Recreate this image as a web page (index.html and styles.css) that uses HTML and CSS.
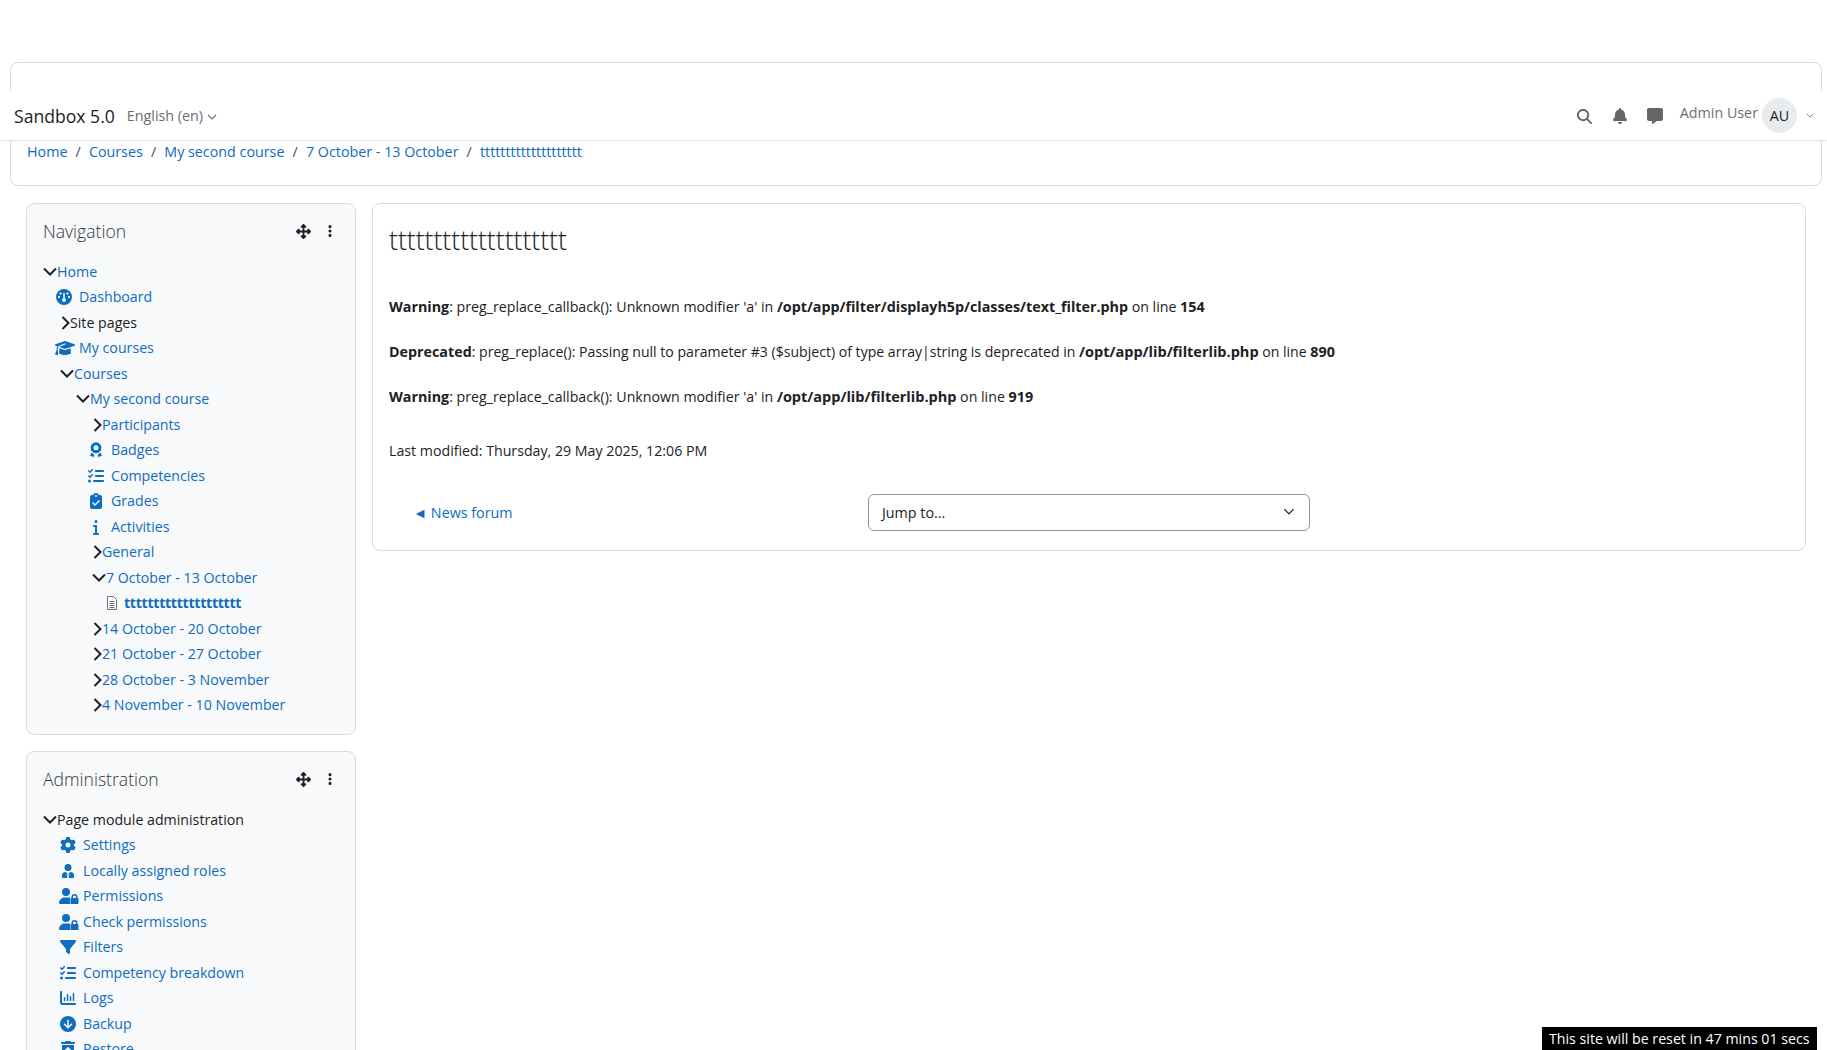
FILE: index.html
```html
<!DOCTYPE html>
<html lang="en">
<head>
<meta charset="utf-8">
<title>tttttttttttttttttttt</title>
<link rel="stylesheet" href="styles.css">
</head>
<body>
<svg class="sprite" aria-hidden="true">
  <symbol id="i-search" viewBox="0 0 512 512"><path d="M416 208c0 45.9-14.9 88.3-40 122.7L502.6 457.4c12.5 12.5 12.5 32.8 0 45.3s-32.8 12.5-45.3 0L330.7 376c-34.4 25.2-76.8 40-122.7 40C93.1 416 0 322.9 0 208S93.1 0 208 0S416 93.1 416 208zM208 352a144 144 0 1 0 0-288 144 144 0 1 0 0 288z"/></symbol>
  <symbol id="i-bell" viewBox="0 0 448 512"><path d="M224 0c-17.7 0-32 14.3-32 32V51.2C119 66 64 130.6 64 208v18.8c0 47-17.3 92.4-48.5 127.6l-7.4 8.3c-8.4 9.4-10.4 22.9-5.3 34.4S19.4 416 32 416H416c12.6 0 24-7.4 29.2-18.9s3.1-25-5.3-34.4l-7.4-8.3C401.3 319.2 384 273.9 384 226.8V208c0-77.4-55-142-128-156.8V32c0-17.7-14.3-32-32-32zm45.3 493.3c12-12 18.7-28.3 18.7-45.3H224 160c0 17 6.7 33.3 18.7 45.3s28.3 18.7 45.3 18.7s33.3-6.7 45.3-18.7z"/></symbol>
  <symbol id="i-message" viewBox="0 0 512 512"><path d="M64 0C28.7 0 0 28.7 0 64V352c0 35.3 28.7 64 64 64h96v80c0 6.1 3.4 11.6 8.8 14.3s11.9 2.1 16.8-1.5L309.3 416H448c35.3 0 64-28.7 64-64V64c0-35.3-28.7-64-64-64H64z"/></symbol>
  <symbol id="i-move" viewBox="0 0 512 512"><path d="M278.6 9.4c-12.5-12.5-32.8-12.5-45.3 0l-64 64c-9.2 9.2-11.9 22.9-6.9 34.9s16.6 19.8 29.6 19.8h32v96H128V192c0-12.9-7.8-24.6-19.8-29.6s-25.7-2.2-34.9 6.9l-64 64c-12.5 12.5-12.5 32.8 0 45.3l64 64c9.2 9.2 22.9 11.9 34.9 6.9s19.8-16.6 19.8-29.6V288h96v96H192c-12.9 0-24.6 7.8-29.6 19.8s-2.2 25.7 6.9 34.9l64 64c12.5 12.5 32.8 12.5 45.3 0l64-64c9.2-9.2 11.9-22.9 6.9-34.9s-16.6-19.8-29.6-19.8H288V288h96v32c0 12.9 7.8 24.6 19.8 29.6s25.7 2.2 34.9-6.9l64-64c12.5-12.5 12.5-32.8 0-45.3l-64-64c-9.2-9.2-22.9-11.9-34.9-6.9s-19.8 16.6-19.8 29.6v32H288V128h32c12.9 0 24.6-7.8 29.6-19.8s2.2-25.7-6.9-34.9l-64-64z"/></symbol>
  <symbol id="i-dots" viewBox="0 0 128 512"><path d="M64 360a56 56 0 1 0 0 112 56 56 0 1 0 0-112zm0-160a56 56 0 1 0 0 112 56 56 0 1 0 0-112zM120 96A56 56 0 1 0 8 96a56 56 0 1 0 112 0z"/></symbol>
  <symbol id="i-gauge" viewBox="0 0 512 512"><path fill-rule="evenodd" d="M0 256a256 256 0 1 1 512 0A256 256 0 1 1 0 256zM232 140c0-13 11-24 24-24s24 11 24 24V292c23 9 40 32 40 60 0 35-29 64-64 64s-64-29-64-64c0-28 17-51 40-60zM112 144a36 36 0 1 0 72 0 36 36 0 1 0-72 0zM328 144a36 36 0 1 0 72 0 36 36 0 1 0-72 0zM60 256a36 36 0 1 0 72 0 36 36 0 1 0-72 0zM380 256a36 36 0 1 0 72 0 36 36 0 1 0-72 0z"/></symbol>
  <symbol id="i-cap" viewBox="0 0 640 512"><path d="M320 32c-8.1 0-16.1 1.4-23.7 4.1L15.8 137.4C6.3 140.9 0 149.9 0 160s6.3 19.1 15.8 22.6l57.9 20.9C57.3 229.3 48 259.8 48 291.9v28.1c0 28.4-10.8 57.7-22.3 80.8c-6.5 13-13.9 25.8-22.5 37.6C0 442.7-.9 448.3 .9 453.4s6 8.9 11.2 10.2l64 16c4.2 1.1 8.7 .3 12.4-2s6.3-6.1 7.1-10.4c8.6-42.8 4.3-81.2-2.1-108.7C90.3 344.3 86 329.8 80 316.5V291.9c0-30.2 10.2-58.7 27.9-81.5c12.9-15.5 29.6-28 49.2-35.7l157-61.7c8.2-3.2 17.5 .8 20.7 9s-.8 17.5-9 20.7l-157 61.7c-12.4 4.9-23.3 12.4-32.2 21.6l159.6 57.6c7.6 2.7 15.6 4.1 23.7 4.1s16.1-1.4 23.7-4.1L624.2 182.6c9.5-3.4 15.8-12.5 15.8-22.6s-6.3-19.1-15.8-22.6L343.7 36.1C336.1 33.4 328.1 32 320 32zM128 408c0 35.3 86 72 192 72s192-36.7 192-72L496.7 262.6 354.5 314c-11.1 4-22.8 6-34.5 6s-23.5-2-34.5-6L143.3 262.6 128 408z"/></symbol>
  <symbol id="i-award" viewBox="0 0 384 512"><path fill-rule="evenodd" d="M192 0l42 26 50-2 24 44 44 24-2 50 26 42-26 42 2 50-44 24-24 44-50-2-42 26-42-26-50 2-24-44-44-24 2-50L8 184l26-42-2-50 44-24 24-44 50 2zM192 104a80 80 0 1 0 0 160 80 80 0 1 0 0-160z"/><path d="M40 345l-40 110 64-6 38 58 42-118-38 2-30-30zM344 345l40 110-64-6-38 58-42-118 38 2 30-30z"/></symbol>
  <symbol id="i-list" viewBox="0 0 512 512"><path d="M152 38c10 9 11 24 2 34L82 152c-4 5-11 8-17 8s-13-2-17-7L8 113c-9-9-9-25 0-34s25-9 34 0l22 22 54-61c9-10 24-11 34-2zM152 198c10 9 11 24 2 34L82 312c-4 5-11 8-17 8s-13-2-17-7L8 273c-9-9-9-25 0-34s25-9 34 0l22 22 54-61c9-10 24-11 34-2zM224 96c0-18 14-32 32-32H480c18 0 32 14 32 32s-14 32-32 32H256c-18 0-32-14-32-32zM224 256c0-18 14-32 32-32H480c18 0 32 14 32 32s-14 32-32 32H256c-18 0-32-14-32-32zM160 416c0-18 14-32 32-32H480c18 0 32 14 32 32s-14 32-32 32H192c-18 0-32-14-32-32zM48 368a48 48 0 1 1 0 96 48 48 0 1 1 0-96z"/></symbol>
  <symbol id="i-clip" viewBox="0 0 384 512"><path fill-rule="evenodd" d="M192 0c-42 0-77 27-90 64H64C29 64 0 93 0 128V448c0 35 29 64 64 64H320c35 0 64-29 64-64V128c0-35-29-64-64-64H282C269 27 234 0 192 0zM192 64a32 32 0 1 1 0 64 32 32 0 1 1 0-64zM305 273L177 401c-9 9-25 9-34 0L79 337c-9-9-9-25 0-34s25-9 34 0l47 47L271 239c9-9 25-9 34 0s9 25 0 34z"/></symbol>
  <symbol id="i-info" viewBox="0 0 192 512"><path d="M48 80a48 48 0 1 1 96 0A48 48 0 1 1 48 80zM0 224c0-17.7 14.3-32 32-32H96c17.7 0 32 14.3 32 32V448h32c17.7 0 32 14.3 32 32s-14.3 32-32 32H32c-17.7 0-32-14.3-32-32s14.3-32 32-32H64V256H32c-17.7 0-32-14.3-32-32z"/></symbol>
  <symbol id="i-gear" viewBox="0 0 512 512"><path d="M495.9 166.6c3.2 8.7 .5 18.4-6.4 24.6l-43.3 39.4c1.1 8.3 1.7 16.8 1.7 25.4s-.6 17.1-1.7 25.4l43.3 39.4c6.9 6.2 9.6 15.9 6.4 24.6c-4.4 11.9-9.7 23.3-15.8 34.3l-4.7 8.1c-6.6 11-14 21.4-22.1 31.2c-5.9 7.2-15.7 9.6-24.5 6.8l-55.7-17.7c-13.4 10.3-28.2 18.9-44 25.4l-12.5 57.1c-2 9.1-9 16.3-18.2 17.8c-13.8 2.3-28 3.5-42.5 3.5s-28.7-1.2-42.5-3.5c-9.2-1.5-16.2-8.7-18.2-17.8l-12.5-57.1c-15.8-6.5-30.6-15.1-44-25.4L83.1 425.9c-8.8 2.8-18.6 .3-24.5-6.8c-8.1-9.8-15.5-20.2-22.1-31.2l-4.7-8.1c-6.1-11-11.4-22.4-15.8-34.3c-3.2-8.7-.5-18.4 6.4-24.6l43.3-39.4C64.6 273.1 64 264.6 64 256s.6-17.1 1.7-25.4L22.4 191.2c-6.9-6.2-9.6-15.9-6.4-24.6c4.4-11.9 9.7-23.3 15.8-34.3l4.7-8.1c6.6-11 14-21.4 22.1-31.2c5.9-7.2 15.7-9.6 24.5-6.8l55.7 17.7c13.4-10.3 28.2-18.9 44-25.4l12.5-57.1c2-9.1 9-16.3 18.2-17.8C227.3 1.2 241.5 0 256 0s28.7 1.2 42.5 3.5c9.2 1.5 16.2 8.7 18.2 17.8l12.5 57.1c15.8 6.5 30.6 15.1 44 25.4l55.7-17.7c8.8-2.8 18.6-.3 24.5 6.8c8.1 9.8 15.5 20.2 22.1 31.2l4.7 8.1c6.1 11 11.4 22.4 15.8 34.3zM256 336a80 80 0 1 0 0-160 80 80 0 1 0 0 160z"/></symbol>
  <symbol id="i-tie" viewBox="0 0 448 512"><path d="M224 256a128 128 0 1 0 0-256 128 128 0 1 0 0 256zM130 296C58 296 0 354 0 426v54c0 18 14 32 32 32H198l-24-126 20-62c-6-5-12-8-20-8zM318 296c72 0 130 58 130 130v54c0 18-14 32-32 32H250l24-126-20-62c6-5 12-8 20-8zM224 340l-18 46 18 96 18-96z"/></symbol>
  <symbol id="i-ulock" viewBox="0 0 640 512"><path fill-rule="evenodd" d="M224 256a128 128 0 1 0 0-256 128 128 0 1 0 0 256zM178 304C80 304 0 384 0 482c0 16 13 30 30 30H360c-5-9-8-20-8-32V352c0-13 3-25 10-35-12-8-28-13-44-13H178zM496 240a48 48 0 0 0-48 48v32h96V288a48 48 0 0 0-48-48zM400 288a96 96 0 1 1 192 0v32c18 0 32 14 32 32V480c0 18-14 32-32 32H400c-18 0-32-14-32-32V352c0-18 14-32 32-32V288z"/></symbol>
  <symbol id="i-filter" viewBox="0 0 512 512"><path d="M3.9 54.9C10.5 40.9 24.5 32 40 32H472c15.5 0 29.5 8.9 36.1 22.9s4.6 30.5-5.2 42.5L320 320.9V448c0 12.1-6.8 23.2-17.7 28.6s-23.8 4.3-33.5-3l-64-48c-8.1-6-12.8-15.5-12.8-25.6V320.9L9 97.3C-.7 85.4-2.8 68.8 3.9 54.9z"/></symbol>
  <symbol id="i-chart" viewBox="0 0 512 512"><path d="M32 32c18 0 32 14 32 32V400c0 9 7 16 16 16H480c18 0 32 14 32 32s-14 32-32 32H80c-44 0-80-36-80-80V64c0-18 14-32 32-32zM144 224c13 0 24 11 24 24v88c0 13-11 24-24 24s-24-11-24-24V248c0-13 11-24 24-24zM240 128c13 0 24 11 24 24V336c0 13-11 24-24 24s-24-11-24-24V152c0-13 11-24 24-24zM336 192c13 0 24 11 24 24V336c0 13-11 24-24 24s-24-11-24-24V216c0-13 11-24 24-24zM432 96c13 0 24 11 24 24V336c0 13-11 24-24 24s-24-11-24-24V120c0-13 11-24 24-24z"/></symbol>
  <symbol id="i-down" viewBox="0 0 512 512"><path d="M256 0a256 256 0 1 0 0 512A256 256 0 1 0 256 0zM127 281c-9.4-9.4-9.4-24.6 0-33.9s24.6-9.4 33.9 0l71 71L232 136c0-13.3 10.7-24 24-24s24 10.7 24 24l0 182.1 71-71c9.4-9.4 24.6-9.4 33.9 0s9.4 24.6 0 33.9L273 393c-9.4 9.4-24.6 9.4-33.9 0L127 281z"/></symbol>
  <symbol id="i-restore" viewBox="0 0 448 512"><path fill-rule="evenodd" d="M163.8 0H284.2c12.1 0 23.2 6.8 28.6 17.7L320 32h96c17.7 0 32 14.3 32 32s-14.3 32-32 32H32C14.3 96 0 81.7 0 64S14.3 32 32 32h96l7.2-14.3C140.6 6.8 151.7 0 163.8 0zM32 128H416V448c0 35.3-28.7 64-64 64H96c-35.3 0-64-28.7-64-64V128zM207 199L127 279c-9 9-9 25 0 34s25 9 34 0l39-39V408c0 13 11 24 24 24s24-11 24-24V274l39 39c9 9 25 9 34 0s9-25 0-34l-80-80c-9-9-25-9-34 0z"/></symbol>
  <symbol id="i-open" viewBox="0 0 14 10"><path d="M1 1.5l6 6 6-6" fill="none" stroke="currentColor" stroke-width="2"/></symbol>
  <symbol id="i-closed" viewBox="0 0 9 14"><path d="M1.5 1l6 6-6 6" fill="none" stroke="currentColor" stroke-width="2"/></symbol>
  <symbol id="i-small" viewBox="0 0 10 6"><path d="M1 1l4 4 4-4" fill="none" stroke="currentColor" stroke-width="1.1"/></symbol>
  <symbol id="i-file" viewBox="0 0 12 14"><path d="M1.5.5h6l3 3v10h-9zM3.5 5.5h5M3.5 7.5h5M3.5 9.5h5M3.5 11.5h5" fill="#fff" stroke="#6a737b"/></symbol>
</svg>

<header class="navbar">
  <a class="brand">Sandbox 5.0</a>
  <span class="lang">English (en) <svg class="small-chev"><use href="#i-small"/></svg></span>
  <div class="nav-right">
    <svg class="nav-ico search"><use href="#i-search"/></svg>
    <svg class="nav-ico bell"><use href="#i-bell"/></svg>
    <svg class="nav-ico message"><use href="#i-message"/></svg>
    <span class="username">Admin User</span>
    <span class="avatar">AU</span>
    <svg class="small-chev user-chev"><use href="#i-small"/></svg>
  </div>
</header>

<div class="page-header">
  <nav class="breadcrumb">
    <a>Home</a><span class="sep">/</span><a>Courses</a><span class="sep">/</span><a>My second course</a><span class="sep">/</span><a>7 October - 13 October</a><span class="sep">/</span><a>tttttttttttttttttttt</a>
  </nav>
</div>

<div class="columns">
  <aside class="sidebar">
    <section class="block">
      <div class="block-head">
        <h5 class="block-title">Navigation</h5>
        <svg class="head-ico move"><use href="#i-move"/></svg>
        <svg class="head-ico dots"><use href="#i-dots"/></svg>
      </div>
      <ul class="tree">
        <li><div class="row"><svg class="open"><use href="#i-open"/></svg><a>Home</a></div>
          <ul class="sub s1">
            <li><div class="row leaf"><svg class="ico"><use href="#i-gauge"/></svg><a>Dashboard</a></div></li>
            <li><div class="row"><svg class="closed"><use href="#i-closed"/></svg><span>Site pages</span></div></li>
            <li><div class="row leaf"><svg class="ico wide"><use href="#i-cap"/></svg><a>My courses</a></div></li>
            <li><div class="row"><svg class="open"><use href="#i-open"/></svg><a>Courses</a></div>
              <ul class="sub s2">
                <li><div class="row"><svg class="open"><use href="#i-open"/></svg><a>My second course</a></div>
                  <ul class="sub s2">
                    <li><div class="row"><svg class="closed"><use href="#i-closed"/></svg><a>Participants</a></div></li>
                    <li><div class="row leaf"><svg class="ico"><use href="#i-award"/></svg><a>Badges</a></div></li>
                    <li><div class="row leaf"><svg class="ico"><use href="#i-list"/></svg><a>Competencies</a></div></li>
                    <li><div class="row leaf"><svg class="ico"><use href="#i-clip"/></svg><a>Grades</a></div></li>
                    <li><div class="row leaf"><svg class="ico"><use href="#i-info"/></svg><a>Activities</a></div></li>
                    <li><div class="row"><svg class="closed"><use href="#i-closed"/></svg><a>General</a></div></li>
                    <li><div class="row"><svg class="open"><use href="#i-open"/></svg><a>7 October - 13 October</a></div>
                      <ul class="sub s3">
                        <li><div class="row"><svg class="file"><use href="#i-file"/></svg><a class="current">tttttttttttttttttttt</a></div></li>
                      </ul>
                    </li>
                    <li><div class="row"><svg class="closed"><use href="#i-closed"/></svg><a>14 October - 20 October</a></div></li>
                    <li><div class="row"><svg class="closed"><use href="#i-closed"/></svg><a>21 October - 27 October</a></div></li>
                    <li><div class="row"><svg class="closed"><use href="#i-closed"/></svg><a>28 October - 3 November</a></div></li>
                    <li><div class="row"><svg class="closed"><use href="#i-closed"/></svg><a>4 November - 10 November</a></div></li>
                  </ul>
                </li>
              </ul>
            </li>
          </ul>
        </li>
      </ul>
    </section>

    <section class="block">
      <div class="block-head">
        <h5 class="block-title">Administration</h5>
        <svg class="head-ico move"><use href="#i-move"/></svg>
        <svg class="head-ico dots"><use href="#i-dots"/></svg>
      </div>
      <ul class="tree">
        <li><div class="row"><svg class="open"><use href="#i-open"/></svg><span>Page module administration</span></div>
          <ul class="sub s1a">
            <li><div class="row leaf"><svg class="ico"><use href="#i-gear"/></svg><a>Settings</a></div></li>
            <li><div class="row leaf"><svg class="ico small"><use href="#i-tie"/></svg><a>Locally assigned roles</a></div></li>
            <li><div class="row leaf"><svg class="ico wide"><use href="#i-ulock"/></svg><a>Permissions</a></div></li>
            <li><div class="row leaf"><svg class="ico wide"><use href="#i-ulock"/></svg><a>Check permissions</a></div></li>
            <li><div class="row leaf"><svg class="ico"><use href="#i-filter"/></svg><a>Filters</a></div></li>
            <li><div class="row leaf"><svg class="ico"><use href="#i-list"/></svg><a>Competency breakdown</a></div></li>
            <li><div class="row leaf"><svg class="ico"><use href="#i-chart"/></svg><a>Logs</a></div></li>
            <li><div class="row leaf"><svg class="ico"><use href="#i-down"/></svg><a>Backup</a></div></li>
            <li><div class="row leaf"><svg class="ico"><use href="#i-restore"/></svg><a>Restore</a></div></li>
          </ul>
        </li>
      </ul>
    </section>
  </aside>

  <main class="content">
    <h1 class="title">tttttttttttttttttttt</h1>
    <p class="msg"><b>Warning</b>: preg_replace_callback(): Unknown modifier 'a' in <b>/opt/app/filter/displayh5p/classes/text_filter.php</b> on line <b>154</b></p>
    <p class="msg tight"><b>Deprecated</b>: preg_replace(): Passing null to parameter #3 ($subject) of type array|string is deprecated in <b class="path">/opt/app/lib/filterlib.php</b> on line <b>890</b></p>
    <p class="msg"><b>Warning</b>: preg_replace_callback(): Unknown modifier 'a' in <b class="path">/opt/app/lib/filterlib.php</b> on line <b>919</b></p>
    <p class="modified">Last modified: Thursday, 29 May 2025, 12:06 PM</p>
    <div class="activity-nav">
      <div class="prev"><a>◄ News forum</a></div>
      <div class="jump"><span>Jump to...</span><svg class="jump-chev"><use href="#i-small"/></svg></div>
    </div>
  </main>
</div>

<div class="reset-note">This site will be reset in 47 mins 01 secs</div>
</body>
</html>
```

FILE: styles.css
```css
* { box-sizing: border-box; }
html { overflow: hidden; }
body {
  margin: 0;
  height: 100vh;
  overflow: hidden;
  padding-top: 62px;
  background: #fff;
  color: #1d2125;
  font-family: "Open Sans", "Noto Sans", sans-serif;
  font-size: 14.3px;
  line-height: 22.5px;
}
a { color: #0f6cbf; text-decoration: none; }
svg { fill: currentColor; flex: none; }
.sprite { display: none; }

/* top bar */
.navbar {
  position: fixed;
  top: 90px;
  left: 0;
  right: 0;
  height: 51px;
  display: flex;
  align-items: center;
  padding: 0 14px;
  background: #fff;
  border-bottom: 1px solid #dee2e6;
  z-index: 5;
}
.brand { color: #1d2125; font-size: 17.6px; margin-top: 2px; }
.lang { margin: 3px 0 0 12px; color: #6a6e73; display: flex; align-items: center; gap: 4px; }
.small-chev { width: 10px; height: 6px; }
.nav-right { margin: 0 -1px 0 auto; display: flex; align-items: center; color: #666; }
.nav-ico { height: 16px; margin-top: 2px; }
.search { width: 15px; height: 15px; margin-right: 21px; }
.bell { width: 14px; margin-right: 20px; }
.message { width: 16px; margin-right: 17px; }
.username { color: #6a6e73; margin-top: -3px; }
.avatar {
  width: 35px;
  height: 35px;
  margin-left: 4px;
  border-radius: 50%;
  background: #e9ecef;
  color: #1d2125;
  display: flex;
  align-items: center;
  justify-content: center;
  padding-top: 3px;
}
.user-chev { width: 8px; height: 5px; margin-left: 9px; color: #6a6e73; }

/* page header */
.page-header {
  margin: 0 5px 17px 10px;
  height: 124px;
  padding: 77.5px 16px 0;
  border: 1px solid #dadcdf;
  border-radius: 8px;
}
.breadcrumb { display: flex; }
.sep { width: 21.5px; text-align: center; color: #4a4f55; }

/* columns */
.columns {
  display: grid;
  grid-template-columns: 330px 1434px;
  column-gap: 16px;
  padding-left: 26px;
  align-items: start;
}
.block {
  background: #f8f9fa;
  border: 1px solid #dadcdf;
  border-radius: 8px;
  padding: 16px 16px 14.5px;
  margin-bottom: 16px;
}
.block-head { display: flex; align-items: center; height: 26px; margin: -2px 0 16.5px; padding-right: 7px; }
.block-title { margin: 0 auto 0 0; font-size: 17.6px; font-weight: 300; line-height: 26px; color: #31363b; }
.head-ico { color: #1d2125; }
.move { width: 15px; height: 15px; margin-right: 17px; }
.dots { width: 4px; height: 14px; }

/* tree */
.tree { font-size: 14.2px; }
.tree, .sub { list-style: none; margin: 0; padding: 0; }
.s1 { padding-left: 18px; }
.s1a { padding-left: 22px; }
.s2 { padding-left: 16px; }
.s3 { padding-left: 13px; }
.row { display: flex; align-items: center; height: 22.5px; margin-bottom: 3px; white-space: nowrap; }
.open { width: 14px; height: 10px; color: #1d2125; }
.sub .open { margin-left: -1px; }
.closed { width: 9px; height: 14px; color: #1d2125; }
.leaf { padding-left: 18px; position: relative; }
.ico { position: absolute; left: -5px; top: 3px; width: 16px; height: 16px; color: #0f6cbf; }
.wide { width: 20px; left: -6px; }
.small { width: 14px; height: 14px; left: -4px; top: 4px; }
.file { width: 12px; height: 14px; margin-right: 6px; }
.current { font-weight: 700; letter-spacing: -0.3px; }

/* main */
.content {
  height: 348px;
  border: 1px solid #dadcdf;
  border-radius: 8px;
  padding: 15px 16px 16px;
}
.title { margin: 0 0 35px; font-size: 26.6px; line-height: 42px; font-weight: 300; color: #1d2125; }
.msg { margin: 0 0 22.5px; font-size: 14.2px; }
.msg b { font-size: 14.3px; }
.msg .path { font-size: 14.5px; }
.tight { font-size: 14.08px; }
.modified { margin: 31.5px 0 31px; font-size: 14.2px; }
.activity-nav { display: flex; align-items: center; }
.prev { flex: 0 0 479px; padding: 3px 0 0 24px; }
.jump {
  width: 442px;
  height: 37px;
  display: flex;
  align-items: center;
  justify-content: space-between;
  padding: 3px 13px 0;
  border: 1px solid #8f959e;
  border-radius: 6px;
}
.jump-chev { width: 12px; height: 7px; margin: -4px 1px 0 0; color: #1d2125; }

/* reset note */
.reset-note {
  position: fixed;
  right: 10px;
  bottom: 0;
  width: 275px;
  height: 23px;
  padding: 0 7px;
  background: #000;
  color: #fff;
  font-size: 14.2px;
  line-height: 23px;
  white-space: nowrap;
}
```
